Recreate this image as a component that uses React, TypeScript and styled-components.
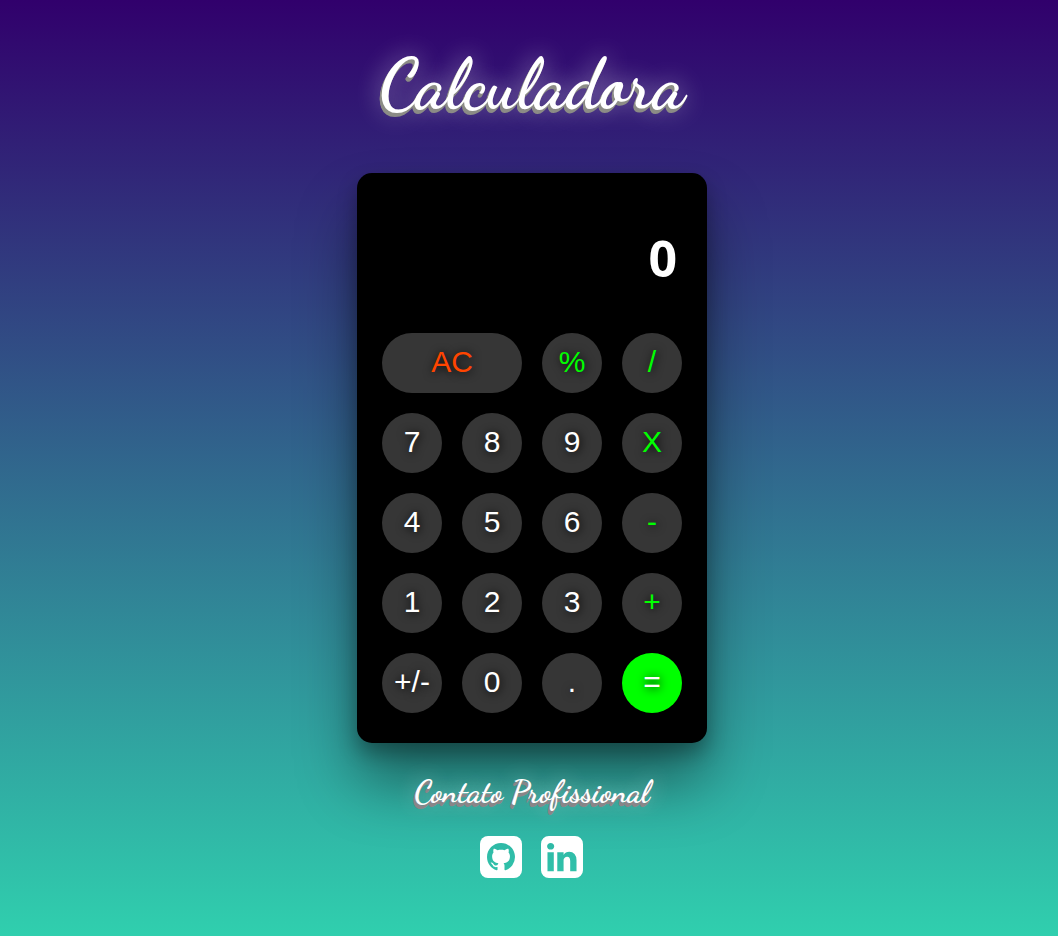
import React, { useState } from 'react';
import styled, { createGlobalStyle } from 'styled-components';

const GlobalStyle = createGlobalStyle`
  * {
    box-sizing: border-box;
    margin: 0;
    padding: 0;
  }

  body {
    min-height: 100vh;
    background: linear-gradient(to bottom, #31006c, #30cfae) no-repeat;
    font-family: 'Liberation Sans', Arial, sans-serif;
  }
`;

const script = `'Dancing Script', cursive`;

const Page = styled.main`
  display: flex;
  flex-direction: column;
  align-items: center;
  min-height: 100vh;
  padding: 41px 0 40px 6px;
  color: #fff;
`;

const Title = styled.h1`
  margin-bottom: 44px;
  font-family: ${script};
  font-size: 70px;
  font-weight: 700;
  line-height: 88px;
  text-shadow:
    -1px 2px 0 #8c8c86,
    -2px 3px 0 #8c8c86,
    -2px 4px 0 #8c8c86,
    0 0 24px rgba(255, 255, 255, 0.55);
`;

const Calculator = styled.section`
  width: 350px;
  padding: 60px 25px 30px;
  border-radius: 15px;
  background: #000;
  box-shadow:
    0 40px 60px rgba(0, 0, 0, 0.4),
    0 10px 20px rgba(0, 0, 0, 0.3);
`;

const Display = styled.output`
  display: block;
  height: 100px;
  padding-right: 5px;
  font-family: 'Open Sans', sans-serif;
  font-size: 50px;
  font-weight: 700;
  line-height: 50px;
  text-align: right;
`;

const Keypad = styled.div`
  display: grid;
  grid-template-columns: repeat(4, 1fr);
  gap: 20px;
`;

type Tone = 'digit' | 'clear' | 'operator' | 'equals';

const tones: Record<Tone, string> = {
  digit: '#fff',
  clear: '#ff4500',
  operator: '#0f0',
  equals: '#fff',
};

const Key = styled.button<{ $tone: Tone }>`
  grid-column: span ${({ $tone }) => ($tone === 'clear' ? 2 : 1)};
  height: 60px;
  padding-bottom: 2px;
  border: none;
  border-radius: 30px;
  background: ${({ $tone }) => ($tone === 'equals' ? '#0f0' : '#363636')};
  color: ${({ $tone }) => tones[$tone]};
  font-family: inherit;
  font-size: 30px;
  text-shadow: 1px 1px 10px #000;
  white-space: nowrap;
  cursor: pointer;
`;

const Contact = styled.footer`
  display: flex;
  flex-direction: column;
  align-items: center;
  padding-top: 29px;
`;

const ContactTitle = styled.h2`
  margin-bottom: 21px;
  font-family: ${script};
  font-size: 32px;
  font-weight: 700;
  line-height: 40px;
  text-shadow:
    -1px 2px 0 #8a8588,
    -2px 3px 0 #8a8588,
    -2px 4px 0 #8a8588,
    0 0 20px rgba(255, 255, 255, 0.5);
`;

const Links = styled.nav`
  display: flex;
  gap: 13px;
`;

const IconLink = styled.a`
  display: flex;
  color: #fff;
`;

const GithubIcon = () => (
  <svg viewBox="0 0 48 48" width="48" height="48" fill="currentColor" aria-hidden="true">
    <mask id="github-mark">
      <rect width="48" height="48" fill="#fff" />
      <path
        fill="#000"
        transform="translate(10 10) scale(1.75)"
        d="M8 0C3.58 0 0 3.58 0 8c0 3.54 2.29 6.53 5.47 7.59.4.07.55-.17.55-.38 0-.19-.01-.82-.01-1.49-2.01.37-2.53-.49-2.69-.94-.09-.23-.48-.94-.82-1.13-.28-.15-.68-.52-.01-.53.63-.01 1.08.58 1.23.82.72 1.21 1.87.87 2.33.66.07-.52.28-.87.51-1.07-1.78-.2-3.64-.89-3.64-3.95 0-.87.31-1.59.82-2.15-.08-.2-.36-1.02.08-2.12 0 0 .67-.21 2.2.82.64-.18 1.32-.27 2-.27s1.36.09 2 .27c1.53-1.04 2.2-.82 2.2-.82.44 1.1.16 1.92.08 2.12.51.56.82 1.27.82 2.15 0 3.07-1.87 3.75-3.65 3.95.29.25.54.73.54 1.48 0 1.07-.01 1.93-.01 2.2 0 .21.15.46.55.38A8.01 8.01 0 0 0 16 8c0-4.42-3.58-8-8-8z"
      />
    </mask>
    <rect x="3" y="3" width="42" height="42" rx="8" mask="url(#github-mark)" />
  </svg>
);

const LinkedinIcon = () => (
  <svg viewBox="0 0 48 48" width="48" height="48" fill="currentColor" aria-hidden="true">
    <path
      transform="translate(3 41.5) scale(0.02734 -0.02734)"
      d="M237 122h231v694h-231v-694zM483 1030q-1 52 -36 86t-93 34t-94.5 -34t-36.5 -86q0 -51 35.5 -85.5t92.5 -34.5h1q59 0 95 34.5t36 85.5zM1068 122h231v398q0 154 -73 233t-193 79q-136 0 -209 -117h2v101h-231q3 -66 0 -694h231v388q0 38 7 56q15 35 45 59.5t74 24.5q116 0 116 -157v-371zM1536 1120v-960q0 -119 -84.5 -203.5t-203.5 -84.5h-960q-119 0 -203.5 84.5t-84.5 203.5v960q0 119 84.5 203.5t203.5 84.5h960q119 0 203.5 -84.5t84.5 -203.5z"
    />
  </svg>
);

const keys: [string, Tone][] = [
  ['AC', 'clear'], ['%', 'operator'], ['/', 'operator'],
  ['7', 'digit'], ['8', 'digit'], ['9', 'digit'], ['X', 'operator'],
  ['4', 'digit'], ['5', 'digit'], ['6', 'digit'], ['-', 'operator'],
  ['1', 'digit'], ['2', 'digit'], ['3', 'digit'], ['+', 'operator'],
  ['+/-', 'digit'], ['0', 'digit'], ['.', 'digit'], ['=', 'equals'],
];

function calculate(a: number, b: number, operator: string) {
  switch (operator) {
    case '+': return a + b;
    case '-': return a - b;
    case 'X': return a * b;
    case '/': return a / b;
    default: return b;
  }
}

export default function App() {
  const [value, setValue] = useState('0');
  const [stored, setStored] = useState(0);
  const [operator, setOperator] = useState('');
  const [fresh, setFresh] = useState(true);

  const press = (key: string) => {
    if (/^\d$/.test(key)) {
      setValue(fresh ? key : value + key);
      setFresh(false);
    } else if (key === '.') {
      if (fresh) setValue('0.');
      else if (!value.includes('.')) setValue(value + '.');
      setFresh(false);
    } else if (key === 'AC') {
      setValue('0');
      setStored(0);
      setOperator('');
      setFresh(true);
    } else if (key === '%') {
      setValue(String(Number(value) / 100));
    } else if (key === '+/-') {
      setValue(String(-Number(value)));
    } else {
      const result = calculate(stored, Number(value), operator);
      setValue(String(result));
      setStored(result);
      setOperator(key === '=' ? '' : key);
      setFresh(true);
    }
  };

  return (
    <>
      <GlobalStyle />
      <Page>
        <Title>Calculadora</Title>
        <Calculator>
          <Display>{value}</Display>
          <Keypad>
            {keys.map(([label, tone]) => (
              <Key key={label} type="button" $tone={tone} onClick={() => press(label)}>
                {label}
              </Key>
            ))}
          </Keypad>
        </Calculator>
        <Contact>
          <ContactTitle>Contato Profissional</ContactTitle>
          <Links>
            <IconLink href="#github" aria-label="GitHub"><GithubIcon /></IconLink>
            <IconLink href="#linkedin" aria-label="LinkedIn"><LinkedinIcon /></IconLink>
          </Links>
        </Contact>
      </Page>
    </>
  );
}
